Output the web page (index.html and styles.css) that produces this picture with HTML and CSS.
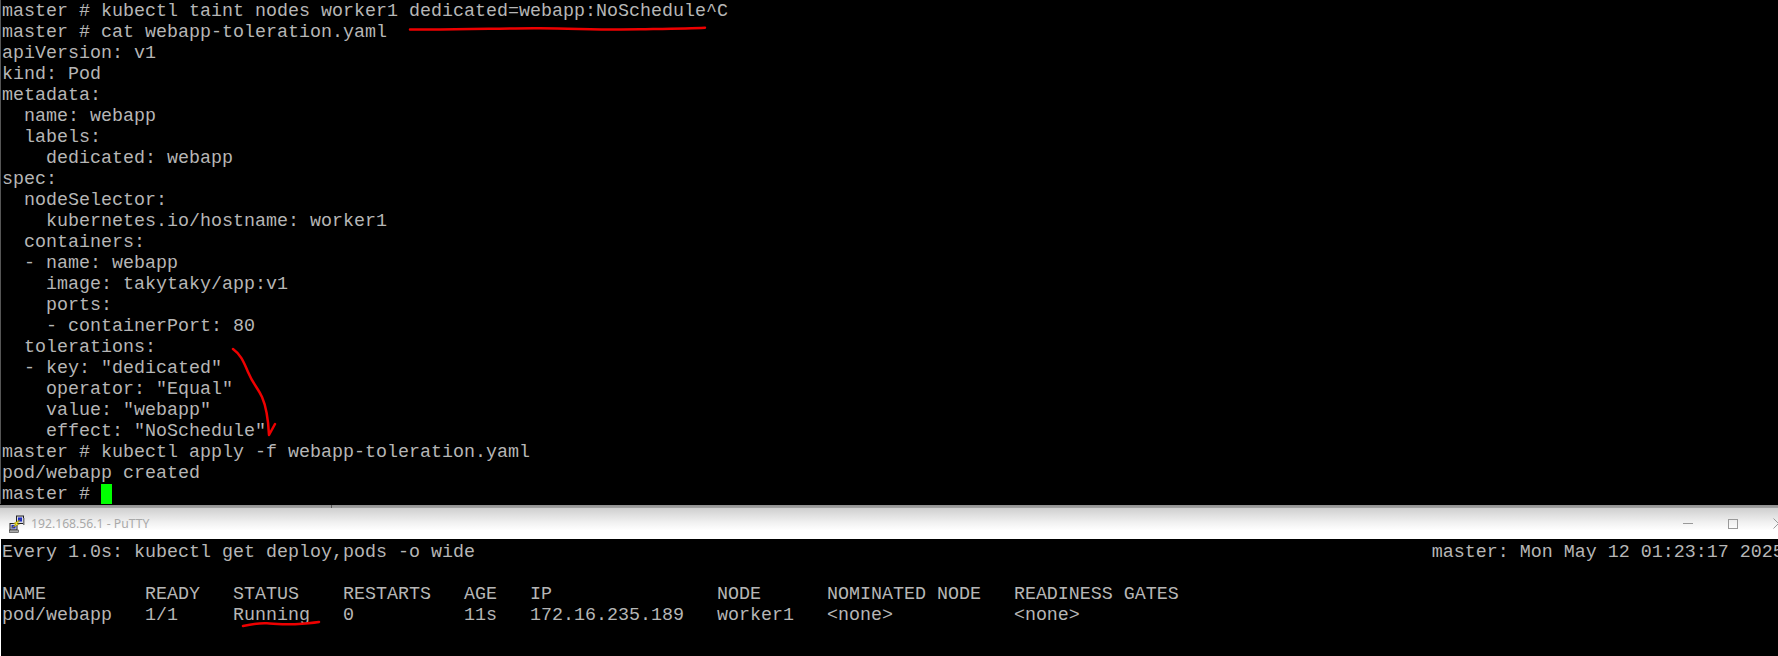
FILE: index.html
```html
<!DOCTYPE html>
<html lang="en">
<head>
<meta charset="utf-8">
<title>PuTTY</title>
<link rel="stylesheet" href="styles.css">
</head>
<body>
<main class="desktop">
<pre class="term term-top">master # kubectl taint nodes worker1 dedicated=webapp:NoSchedule^C
master # cat webapp-toleration.yaml
apiVersion: v1
kind: Pod
metadata:
  name: webapp
  labels:
    dedicated: webapp
spec:
  nodeSelector:
    kubernetes.io/hostname: worker1
  containers:
  - name: webapp
    image: takytaky/app:v1
    ports:
    - containerPort: 80
  tolerations:
  - key: "dedicated"
    operator: "Equal"
    value: "webapp"
    effect: "NoSchedule"
master # kubectl apply -f webapp-toleration.yaml
pod/webapp created
master # <span class="cursor"> </span></pre>
<div class="divider"></div>
<header class="titlebar">
<svg class="app-icon" width="16" height="18" viewBox="0 0 16 18" aria-hidden="true">
<rect x="7.5" y="1" width="7" height="7.5" fill="#d6d6e2" stroke="#222"/>
<rect x="9" y="2.5" width="4" height="4" fill="#1c2cc8"/>
<rect x="14" y="3" width="1.5" height="7" fill="#777"/>
<rect x="1" y="8.5" width="7" height="6.5" fill="#d6d6e2" stroke="#222"/>
<rect x="2.5" y="10" width="4" height="3.5" fill="#1c2cc8"/>
<rect x="0.5" y="15" width="9" height="2.5" fill="#aaa" stroke="#333" stroke-width=".6"/>
<path d="M11.5 4.5 4.5 8.5 7 9 2.5 13 10.5 9 8 8.5Z" fill="#f8e81c" stroke="#6e6200" stroke-width=".4"/>
</svg>
<span class="title">192.168.56.1 - PuTTY</span>
<div class="controls">
<span class="ctl-min"></span>
<span class="ctl-max"></span>
<svg class="ctl-close" width="11" height="11" viewBox="0 0 11 11" aria-hidden="true"><path d="M.5.5 10.5 10.5M10.5.5.5 10.5" stroke="#999" fill="none"/></svg>
</div>
</header>
<pre class="term term-bottom">Every 1.0s: kubectl get deploy,pods -o wide                                                                                       master: Mon May 12 01:23:17 2025

NAME         READY   STATUS    RESTARTS   AGE   IP               NODE      NOMINATED NODE   READINESS GATES
pod/webapp   1/1     Running   0          11s   172.16.235.189   worker1   &lt;none&gt;           &lt;none&gt;</pre>
<svg class="ink" width="1778" height="656" viewBox="0 0 1778 656" aria-hidden="true">
<path d="M410 29.5C470 30 500 28 540 28.3S600 30 640 29.3 690 28.5 705 27.7"/>
<path d="M233 349C240 354 243 360 248 372S258 388 262 397 268 415 269 435L275 424"/>
<path d="M243 626C252 624 260 623 267 623.3S285 624.8 295 624.2 312 623 319 622"/>
</svg>
</main>
</body>
</html>
```
FILE: styles.css
```css
html, body {
  margin: 0;
  padding: 0;
  background: #000;
}
.desktop {
  position: relative;
  width: 1778px;
  height: 656px;
  overflow: hidden;
  display: flex;
  flex-direction: column;
  background: #000;
}
.term {
  margin: 0;
  padding: 0 0 0 2px;
  background: #000;
  color: #b6b6b6;
  font-family: "Liberation Mono", monospace;
  font-size: 18.33px;
  line-height: 21px;
  white-space: pre;
  overflow: hidden;
}
.term-top {
  height: 504px;
  flex: none;
  padding-top: 1px;
  box-sizing: border-box;
  box-shadow: inset 1px 0 0 #555;
}
.term-bottom {
  flex: 1;
  padding-top: 3px;
  box-shadow: inset 1px 0 0 #fff;
}
.cursor {
  background: #00ff00;
}
.divider {
  flex: none;
  height: 4px;
  background:
    linear-gradient(#5a5a5a, #5a5a5a) 331px 1px / 1px 3px no-repeat,
    linear-gradient(#000 0, #000 25%, #8f8f8f 25%, #a4a4a4 100%);
}
.titlebar {
  flex: none;
  height: 31px;
  display: flex;
  align-items: center;
  padding-left: 9px;
  background: linear-gradient(#cfcfcf 0, #f0f0f0 45%, #fff 72%);
}
.app-icon {
  flex: none;
}
.title {
  margin-left: 6px;
  font-family: "Noto Sans", sans-serif;
  font-size: 12.2px;
  color: #a9a9a9;
}
.controls {
  margin-left: auto;
  display: flex;
  align-items: center;
  gap: 35px;
  margin-right: -6px;
}
.ctl-min {
  width: 10px;
  height: 1px;
  background: #999;
}
.ctl-max {
  width: 10px;
  height: 10px;
  border: 1px solid #999;
  box-sizing: border-box;
}
.ink {
  position: absolute;
  left: 0;
  top: 0;
  pointer-events: none;
}
.ink path {
  fill: none;
  stroke: #ee0000;
  stroke-width: 2.5;
  stroke-linecap: round;
  stroke-linejoin: round;
}
```
